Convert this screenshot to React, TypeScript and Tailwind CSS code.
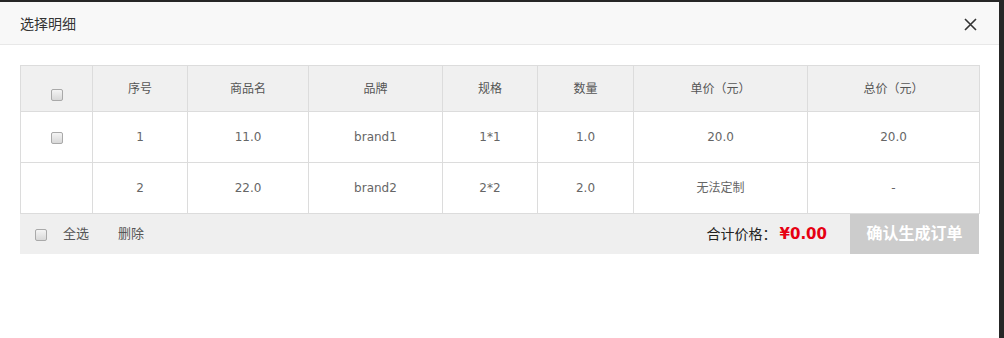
import React from "react";

const font = "font-['DejaVu_Sans','Noto_Sans_CJK_SC',sans-serif]";

interface Item {
  no: number;
  name: string;
  brand: string;
  spec: string;
  qty: string;
  price: string;
  total: string;
  selectable: boolean;
}

const items: Item[] = [
  { no: 1, name: "11.0", brand: "brand1", spec: "1*1", qty: "1.0", price: "20.0", total: "20.0", selectable: true },
  { no: 2, name: "22.0", brand: "brand2", spec: "2*2", qty: "2.0", price: "无法定制", total: "-", selectable: false },
];

const cols = ["w-[72px]", "w-[95px]", "w-[121px]", "w-[134px]", "w-[95px]", "w-[96px]", "w-[174px]", "w-[172px]"];

function Check() {
  return (
    <span className="inline-block w-[12px] h-[12px] rounded-[2px] border border-[#a9a9a9] bg-gradient-to-b from-[#f4f4f4] to-[#d8d8d8] align-middle" />
  );
}

export default function App() {
  return (
    <div className={`w-[1004px] h-[338px] bg-[#262626] pt-[2px] flex ${font}`}>
      <div className="w-[999px] h-full bg-white">
        {/* Header */}
        <div className="h-[43px] bg-[#f8f8f8] border-b border-[#e8e8e8] flex items-center justify-between pl-[20px] pr-[22px]">
          <span className="text-[14px] text-[#333] font-['Noto_Sans_CJK_SC',sans-serif]">选择明细</span>
          <svg width="13" height="13" viewBox="0 0 13 13" className="mt-[2px]">
            <path d="M1 1L12 12M12 1L1 12" stroke="#333" strokeWidth="1.6" />
          </svg>
        </div>

        {/* Body */}
        <div className="px-[20px] pt-[20px]">
          <table className="w-[959px] table-fixed border-collapse text-[12px] text-[#666]">
            <colgroup>
              {cols.map((c, i) => (
                <col key={i} className={c} />
              ))}
            </colgroup>
            <thead>
              <tr className="h-[46px] bg-[#f0f0f0]">
                <th className="border border-[#dcdcdc] font-normal pt-[12px]">
                  <Check />
                </th>
                {["序号", "商品名", "品牌", "规格", "数量", "单价（元）", "总价（元）"].map((h) => (
                  <th key={h} className="border border-[#dcdcdc] font-normal text-[#555]">
                    {h}
                  </th>
                ))}
              </tr>
            </thead>
            <tbody>
              {items.map((it) => (
                <tr key={it.no} className="h-[51px]">
                  <td className="border border-[#dcdcdc] text-center">{it.selectable && <Check />}</td>
                  <td className="border border-[#dcdcdc] text-center">{it.no}</td>
                  <td className="border border-[#dcdcdc] text-center">{it.name}</td>
                  <td className="border border-[#dcdcdc] text-center">{it.brand}</td>
                  <td className="border border-[#dcdcdc] text-center">{it.spec}</td>
                  <td className="border border-[#dcdcdc] text-center">{it.qty}</td>
                  <td className="border border-[#dcdcdc] text-center">{it.price}</td>
                  <td className="border border-[#dcdcdc] text-center">{it.total}</td>
                </tr>
              ))}
            </tbody>
          </table>

          {/* Footer */}
          <div className="w-[959px] h-[40px] bg-[#efefef] flex items-center">
            <span className="ml-[15px]">
              <Check />
            </span>
            <span className="ml-[16px] text-[13px] text-[#555]">全选</span>
            <span className="ml-[29px] text-[13px] text-[#555]">删除</span>
            <div className="ml-auto flex items-center mr-[23px]">
              <span className="text-[14px] text-[#222]">合计价格：</span>
              <span className="text-[15px] font-bold text-[#e60012] ml-[3px]">¥0.00</span>
            </div>
            <button className="w-[129px] h-full bg-[#cccccc] text-white text-[16px] font-bold">确认生成订单</button>
          </div>
        </div>
      </div>
    </div>
  );
}
